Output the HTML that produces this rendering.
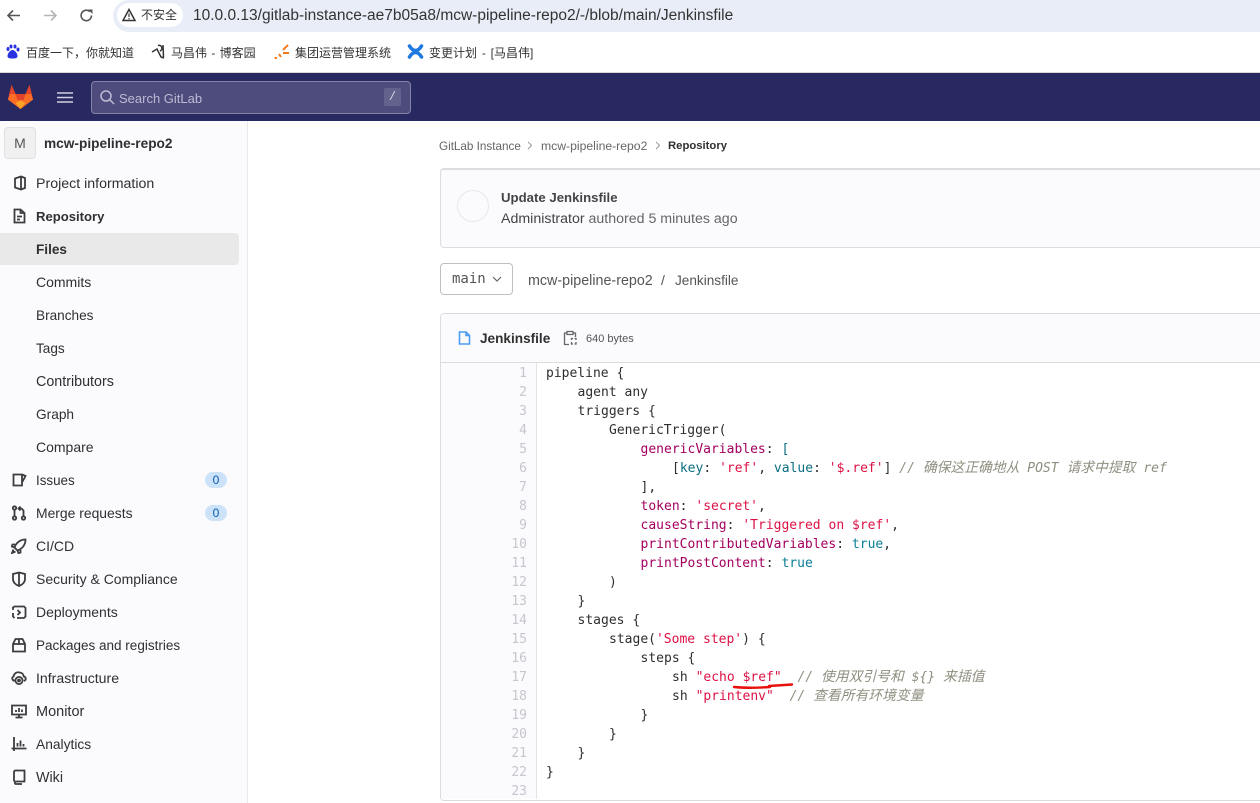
<!DOCTYPE html>
<html lang="zh">
<head>
<meta charset="utf-8">
<title>Jenkinsfile</title>
<style>
html,body{margin:0;padding:0;background:#fff;}
body{width:1260px;height:803px;overflow:hidden;position:relative;font-family:"Liberation Sans","Noto Sans CJK SC",sans-serif;color:#303030;}
.a{position:absolute;white-space:pre;}
.nav{font-size:14px;color:#303030;left:36px;line-height:20px;}
.ic{position:absolute;left:11px;width:16px;height:16px;fill:none;stroke:#3d3d3d;stroke-width:1.8;}
.bm{font-size:12px;color:#333;top:45px;line-height:17px;}
.ln{position:absolute;left:441px;width:86px;text-align:right;font:13px/19px "DejaVu Sans Mono",monospace;color:#c6c6cf;}
.cd{position:absolute;left:546px;font:13px/19px "DejaVu Sans Mono","Noto Sans CJK SC",monospace;letter-spacing:0;word-spacing:.05px;color:#2e2e2e;white-space:pre;}
.k{color:#a3005f}.s{color:#dd1144}.t{color:#0a7f96}.v{color:#0b6e80}
.c{color:#8f8f80;font-style:italic}
.z{font-size:13.8px;line-height:0}
.badge{position:absolute;left:205px;width:22px;height:16px;border-radius:8px;background:#cbe2f9;color:#0b5cad;font-size:12px;line-height:16px;text-align:center;}
</style>
</head>
<body>
<!-- browser chrome -->
<svg style="position:absolute;left:5px;top:6px" width="100" height="20" viewBox="0 0 100 20" fill="none" stroke-width="1.6">
<path d="M15 9.5H3M8 4.5L3 9.5L8 14.5" stroke="#555"/>
<path d="M39 9.5H51M46 4.5L51 9.5L46 14.5" stroke="#b5b5b5"/>
<path d="M86.5 9.5A5.2 5.2 0 1 1 84.8 5.6" stroke="#555"/>
<path d="M83 3.5H87.5V8Z" fill="#555" stroke="none"/>
</svg>
<div class="a" style="left:113px;top:0;width:1147px;height:32px;background:#e9edf7;border-radius:16px 0 0 16px"></div>
<div class="a" style="left:117px;top:3px;width:66px;height:24px;background:#fff;border-radius:12px"></div>
<svg style="position:absolute;left:121px;top:7px" width="16" height="16" viewBox="0 0 16 16" fill="none" stroke="#333" stroke-width="1.5"><path d="M8 2.5L14 13.5H2Z"/><path d="M8 6.5V10M8 11V12.2" stroke-width="1.2"/></svg>
<div class="a" style="left:141px;top:7px;font-size:12px;line-height:17px;color:#333">不安全</div>
<div class="a" style="left:193px;top:7px;font-size:15.5px;line-height:18px;color:#333">10.0.0.13/gitlab-instance-ae7b05a8/mcw-pipeline-repo2/-/blob/main/Jenkinsfile</div>

<svg style="position:absolute;left:5px;top:44px" width="15" height="16" viewBox="0 0 15 16"><g fill="#2932e1"><ellipse cx="3" cy="5" rx="1.5" ry="2"/><ellipse cx="6" cy="2.5" rx="1.5" ry="2"/><ellipse cx="10" cy="2.5" rx="1.5" ry="2"/><ellipse cx="13" cy="5.5" rx="1.5" ry="2"/><path d="M7.5 6C5 6 2.5 9.5 2.5 12C2.5 14 4 14.5 7.5 14.5S12.5 14 12.5 12C12.5 9.5 10 6 7.5 6Z"/></g></svg>
<div class="a bm" style="left:26px">百度一下，你就知道</div>
<svg style="position:absolute;left:151px;top:43px" width="15" height="17" viewBox="0 0 15 17" fill="none" stroke="#333" stroke-width="1.5"><path d="M1 9L6 6L10 14L13 15M7 2.5A2.5 2.5 0 1 1 9 8M12 2L12.5 14"/></svg>
<div class="a bm" style="left:171px;word-spacing:1px">马昌伟 - 博客园</div>
<svg style="position:absolute;left:273px;top:44px" width="17" height="16" viewBox="0 0 17 16" fill="none" stroke="#f47c20" stroke-width="2"><path d="M10 6L15 1M10 9H16M6 10L8 13M3 13V15M1 14H1.5" /></svg>
<div class="a bm" style="left:295px">集团运营管理系统</div>
<svg style="position:absolute;left:407px;top:43px" width="17" height="17" viewBox="0 0 17 17" fill="none" stroke="#1f7ae0" stroke-width="3.6" stroke-linecap="round"><path d="M2.5 3C6 9 11 9 14.5 3M2.5 14C6 8 11 8 14.5 14"/></svg>
<div class="a bm" style="left:429px;word-spacing:1.5px">变更计划 - [马昌伟]</div>

<!-- top navbar -->
<div class="a" style="left:0;top:72px;width:1260px;height:1px;background:#d8d8d8"></div>
<div class="a" style="left:0;top:73px;width:1260px;height:48px;background:#292961"></div>
<svg style="position:absolute;left:7px;top:84px" width="27" height="26" viewBox="0 0 27 26"><path d="M13.5 25L1 15.5L4.5 1L8.5 10H18.5L22.5 1L26 15.5Z" fill="#fc6d26"/><path d="M4.5 1L8.5 10H18.5L22.5 1L26 15.5L19 16H8L1 15.5Z" fill="#e24329"/><path d="M1 15.5L3 10L8.5 10L11 17.5L13.5 25Z M26 15.5L24 10L18.5 10L16 17.5L13.5 25Z" fill="#fc6d26"/><path d="M13.5 25L8.5 19L13.5 16.5L18.5 19Z" fill="#fca326"/></svg>
<svg style="position:absolute;left:57px;top:91px" width="16" height="13" viewBox="0 0 16 13" stroke="#d1d0de" stroke-width="1.6"><path d="M0 2H16M0 6.5H16M0 11H16"/></svg>
<div class="a" style="left:91px;top:81px;width:318px;height:31px;background:#4d4c7d;border:1px solid #8483a6;border-radius:4px"></div>
<svg style="position:absolute;left:99px;top:89px" width="16" height="16" viewBox="0 0 16 16" fill="none" stroke="#bcbbd0" stroke-width="1.5"><circle cx="7" cy="7" r="5"/><path d="M10.5 10.5L15 15"/></svg>
<div class="a" style="left:119px;top:90px;font-size:13px;line-height:18px;color:#bcbbd4">Search GitLab</div>
<div class="a" style="left:384px;top:88px;width:17px;height:18px;background:#63628d;border-radius:2px;color:#d5d5e6;font:12px/18px 'Liberation Mono',monospace;text-align:center">/</div>

<!-- sidebar -->
<div class="a" style="left:0;top:121px;width:247px;height:682px;background:#fbfafd;border-right:1px solid #e8e8ec"></div>
<div class="a" style="left:4px;top:127px;width:30px;height:30px;background:#f0f0f0;border:1px solid #dfdfdf;border-radius:4px;text-align:center;font-size:14px;line-height:30px;color:#555">M</div>
<div class="a" style="left:44px;top:135px;font-size:13.7px;line-height:18px;font-weight:bold;color:#303030">mcw-pipeline-repo2</div>

<div class="a" style="left:0;top:233px;width:239px;height:32px;background:#e9e9e9;border-radius:0 4px 4px 0"></div>

<svg class="ic" style="top:175px" viewBox="0 0 16 16"><path d="M4 3.5L10 1.5L14 3V13L10 14.5L4 12.5ZM10 1.5V14.5"/></svg>
<div class="a nav" style="top:174px;font-size:14.2px">Project information</div>
<svg class="ic" style="top:208px" viewBox="0 0 16 16"><path d="M3.5 1.5H9.5L13.5 5V14.5H3.5ZM9.5 1.5V5H13.5M6 8.5H11M6 11.5H9"/></svg>
<div class="a nav" style="top:207px;font-weight:bold;font-size:13.1px">Repository</div>
<div class="a nav" style="top:240px;font-weight:bold;font-size:13.6px">Files</div>
<div class="a nav" style="top:272px">Commits</div>
<div class="a nav" style="top:306px;font-size:13.6px">Branches</div>
<div class="a nav" style="top:339px;font-size:13.6px">Tags</div>
<div class="a nav" style="top:372px;font-size:14.3px">Contributors</div>
<div class="a nav" style="top:405px;font-size:13.7px">Graph</div>
<div class="a nav" style="top:437px">Compare</div>

<svg class="ic" style="top:472px" viewBox="0 0 16 16"><path d="M2.5 2.5H11V13.5H2.5ZM11 2.5L14.5 4L11 10.5"/></svg>
<div class="a nav" style="top:471px;font-size:13.4px">Issues</div>
<div class="badge" style="top:472px">0</div>
<svg class="ic" style="top:505px" viewBox="0 0 16 16"><circle cx="3.5" cy="3" r="1.7"/><circle cx="3.5" cy="13" r="1.7"/><circle cx="12.5" cy="13" r="1.7"/><path d="M3.5 5V11M12.5 11V5.5L10.5 3.5H8M9.5 1.5L7.5 3.5L9.5 5.5"/></svg>
<div class="a nav" style="top:503px;font-size:13.9px">Merge requests</div>
<div class="badge" style="top:505px">0</div>
<svg class="ic" style="top:538px" viewBox="0 0 16 16"><path d="M14.5 1.5C9 1.5 5 5 3.5 9.5L6.5 12.5C11 11 14.5 7 14.5 1.5ZM4 6.5H1.5L0.8 8.5L3.5 9.5M9.5 12V14.5L7.5 15.2L6.5 12.5M2.5 11.5L1 15L4.5 13.5"/></svg>
<div class="a nav" style="top:536px">CI/CD</div>
<svg class="ic" style="top:571px" viewBox="0 0 16 16"><path d="M8 1.5L14 3V8C14 11.5 11 14 8 15C5 14 2 11.5 2 8V3ZM8 1.5V15"/></svg>
<div class="a nav" style="top:569px">Security &amp; Compliance</div>
<svg class="ic" style="top:604px" viewBox="0 0 16 16"><path d="M2 6V3.5L3.5 2.5H13L14.5 4V12.5L13 14H6M2 9V12.5L3.5 14M6.5 6L9 8.5L6.5 11"/></svg>
<div class="a nav" style="top:602px">Deployments</div>
<svg class="ic" style="top:637px" viewBox="0 0 16 16"><path d="M2 7V14.5H14V7L11.5 2H4.5ZM2 7H14M8 2V7"/></svg>
<div class="a nav" style="top:636px;font-size:13.5px">Packages and registries</div>
<svg class="ic" style="top:670px" viewBox="0 0 16 16"><path d="M3.5 11C1 10 0.5 7.5 2.5 6.5C3 3.5 6 1.5 8.5 2.5C11 2.5 12.5 4.5 12.8 6.5C15.2 7 15.5 10 13 11"/><circle cx="8" cy="10.5" r="3.6"/><circle cx="8" cy="10.5" r="1"/></svg>
<div class="a nav" style="top:668px;font-size:14.1px">Infrastructure</div>
<svg class="ic" style="top:703px" viewBox="0 0 16 16"><path d="M1 2.5H15V11.5H1ZM8 11.5V14.5M4.5 14.5H11.5M5 9V7M8 9V5M11 9V6.5"/></svg>
<div class="a nav" style="top:702px;font-size:14.5px">Monitor</div>
<svg class="ic" style="top:736px" viewBox="0 0 16 16"><path d="M3 1V15M0.5 12.5H15.5M6.5 10.5V7M9.5 10.5V4.5M12.5 10.5V8"/></svg>
<div class="a nav" style="top:735px;font-size:13.8px">Analytics</div>
<svg class="ic" style="top:769px" viewBox="0 0 16 16"><path d="M3 12.5V2.5L4 1.5H13.5V12.5H4.5A1.5 1.5 0 0 0 4.5 15H11"/></svg>
<div class="a nav" style="top:768px;font-size:14.3px">Wiki</div>

<!-- breadcrumbs -->
<div class="a" style="left:439px;top:138px;font-size:11.7px;line-height:17px;color:#666">GitLab Instance</div>
<svg style="position:absolute;left:527px;top:141px" width="6" height="9" viewBox="0 0 6 9" fill="none" stroke="#999" stroke-width="1"><path d="M1 1L4.5 4.5L1 8"/></svg>
<div class="a" style="left:541px;top:138px;font-size:12.2px;line-height:17px;color:#666">mcw-pipeline-repo2</div>
<svg style="position:absolute;left:655px;top:141px" width="6" height="9" viewBox="0 0 6 9" fill="none" stroke="#999" stroke-width="1"><path d="M1 1L4.5 4.5L1 8"/></svg>
<div class="a" style="left:668px;top:138px;line-height:17px;color:#303030;font-weight:bold;font-size:11.3px">Repository</div>

<!-- commit box -->
<div class="a" style="left:440px;top:168px;width:830px;height:77px;background:#fbfafd;border:1px solid #dcdcde;border-top:2px solid #dcdcde;border-radius:4px;box-sizing:content-box"></div>
<div class="a" style="left:457px;top:190px;width:30px;height:30px;border:1px solid #e8e8ea;border-radius:50%;background:#fbfafd"></div>
<div class="a" style="left:501px;top:189px;font-size:13.2px;line-height:18px;font-weight:bold;color:#444">Update Jenkinsfile</div>
<div class="a" style="left:501px;top:210px;font-size:14.2px;line-height:18px;color:#666"><span style="color:#444">Administrator</span> authored 5 minutes ago</div>

<!-- branch -->
<div class="a" style="left:440px;top:263px;width:71px;height:30px;border:1px solid #bfbfc3;border-radius:4px;background:#fff"></div>
<div class="a" style="left:452px;top:270px;font:14px/18px 'DejaVu Sans Mono',monospace;color:#555">main</div>
<svg style="position:absolute;left:492px;top:276px" width="10" height="7" viewBox="0 0 10 7" fill="none" stroke="#666" stroke-width="1.2"><path d="M1 1L5 5L9 1"/></svg>
<div class="a" style="left:528px;top:272px;font-size:14.3px;line-height:18px;color:#555">mcw-pipeline-repo2</div>
<div class="a" style="left:661px;top:271px;font-size:14px;line-height:18px;color:#555">/</div>
<div class="a" style="left:675px;top:272px;font-size:13.6px;line-height:18px;color:#555">Jenkinsfile</div>

<!-- file box -->
<div class="a" style="left:440px;top:313px;width:830px;height:486px;border:1px solid #dcdcde;border-radius:4px"></div>
<div class="a" style="left:441px;top:314px;width:819px;height:48px;background:#fbfafd;border-bottom:1px solid #dcdcde;border-radius:4px 0 0 0"></div>
<svg style="position:absolute;left:458px;top:331px" width="13" height="14" viewBox="0 0 13 14" fill="none" stroke="#4a9df0" stroke-width="1.6"><path d="M1.5 1H8L11.5 4.5V13H1.5ZM8 1V4.5H11.5"/></svg>
<div class="a" style="left:480px;top:330px;font-size:13.6px;line-height:18px;font-weight:bold;color:#303030">Jenkinsfile</div>
<svg style="position:absolute;left:563px;top:330px" width="14" height="16" viewBox="0 0 14 16" fill="none" stroke="#666" stroke-width="1.3"><path d="M4 3H1.5V14.5H6M10 3H12.5V7M4 1.5H10V4.5H4ZM8.5 10V8.5H10M11.5 8.5H13V10M13 12V14H11.5M10 14H8.5V12"/></svg>
<div class="a" style="left:586px;top:332px;font-size:11px;line-height:15px;color:#555">640 bytes</div>

<!-- code -->
<div class="a" style="left:441px;top:363px;width:95px;height:436px;background:#fbfafd;border-right:1px solid #e4e4e8"></div>
<div class="ln" style="top:364px">1<br>2<br>3<br>4<br>5<br>6<br>7<br>8<br>9<br>10<br>11<br>12<br>13<br>14<br>15<br>16<br>17<br>18<br>19<br>20<br>21<br>22<br>23</div>
<div class="cd" style="top:364px">pipeline {
    agent any
    triggers {
        GenericTrigger(
            <span class="k">genericVariables</span>: <span class="v">[</span>
                [<span class="v">key</span>: <span class="s">'ref'</span>, <span class="v">value</span>: <span class="s">'$.ref'</span>] <span class="c">// <span class="z">确保这正确地从</span> POST <span class="z">请求中提取</span> ref</span>
            ],
            <span class="k">token</span>: <span class="s">'secret'</span>,
            <span class="k">causeString</span>: <span class="s">'Triggered on $ref'</span>,
            <span class="k">printContributedVariables</span>: <span class="t">true</span>,
            <span class="k">printPostContent</span>: <span class="t">true</span>
        )
    }
    stages {
        stage(<span class="s">'Some step'</span>) {
            steps {
                sh <span class="s">"echo $ref"</span>  <span class="c">// <span class="z">使用双引号和</span> ${} <span class="z">来插值</span></span>
                sh <span class="s">"printenv"</span>  <span class="c">// <span class="z">查看所有环境变量</span></span>
            }
        }
    }
}</div>
<svg style="position:absolute;left:730px;top:680px" width="66" height="12" viewBox="0 0 66 12" fill="none" stroke="#e8120c" stroke-width="2.4" stroke-linecap="round"><path d="M4 7C14 8 26 8 40 7"/><path d="M39 6L62 4.5"/></svg>
</body>
</html>
